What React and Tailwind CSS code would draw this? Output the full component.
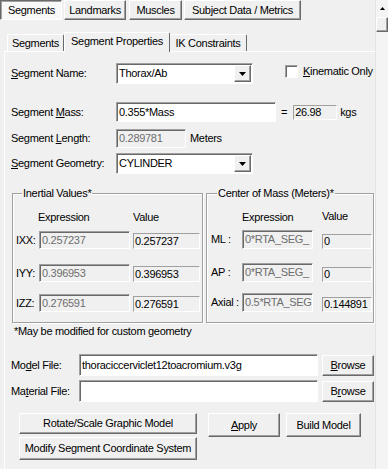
import React from 'react';

const raised = "bg-[#f0f0f0] border border-t-white border-l-white border-r-[#696969] border-b-[#696969] shadow-[inset_-1px_-1px_0_#a0a0a0]";
const sunken = "border border-t-[#a0a0a0] border-l-[#a0a0a0] border-r-white border-b-white shadow-[inset_1px_1px_0_#696969]";
const thin = "border border-t-[#a0a0a0] border-l-[#a0a0a0] border-r-white border-b-white";

const U = ({ children }) => <span className="underline underline-offset-[1px]">{children}</span>;

const Arrow = () => (
    <svg width="7" height="4" viewBox="0 0 7 4"><path d="M0 0h7L3.5 4z" fill="#000" /></svg>
);

const Select = ({ value }) => (
    <div className={`${sunken} bg-white w-[137px] h-[21px] flex items-center pl-[1px] pr-[1px]`}>
        <span className="flex-1 pl-[1px]">{value}</span>
        <div className={`${raised} w-[17px] h-[17px] flex items-center justify-center`}>
            <Arrow />
        </div>
    </div>
);

const Field = ({ className = '', children, disabled }) => (
    <div className={`${sunken} ${disabled ? 'bg-[#f0f0f0] text-[#6d6d6d]' : 'bg-white'} flex items-center pl-[2px] overflow-hidden whitespace-nowrap ${className}`}>
        {children}
    </div>
);

const Value = ({ className = '', children }) => (
    <div className={`${thin} flex items-center pl-[1px] overflow-hidden whitespace-nowrap ${className}`}>{children}</div>
);

const Btn = ({ className = '', children }) => (
    <div className={`${raised} flex items-center justify-center whitespace-nowrap ${className}`}>{children}</div>
);

const InertRow = ({ label, expr, value, className = '' }) => (
    <div className={`flex items-end h-[18px] ${className}`}>
        <span className="w-[23px] self-center">{label}</span>
        <Field disabled className="w-[91px] h-[18px]">{expr}</Field>
        <Value className="ml-[3px] w-[67px] h-[16px]">{value}</Value>
    </div>
);

const ComRow = ({ label, expr, value, className = '' }) => (
    <div className={`flex items-end h-[19px] ${className}`}>
        <span className="w-[31px] self-center">{label}</span>
        <Field disabled className="w-[71px] h-[19px]">{expr}</Field>
        <Value className="ml-[9px] w-[50px] h-[15px]">{value}</Value>
    </div>
);

export default function App() {
    return (
        <div className="w-[388px] h-[469px] flex overflow-hidden bg-[#f0f0f0] text-black text-[11px] leading-[13px] tracking-[-0.3px] font-['Liberation_Sans',Arial,sans-serif]">
            <div className="w-[375px] shrink-0">
                {/* top button bar */}
                <div className="flex h-[20px]">
                    <div className="w-[62px] h-[20px] flex items-center justify-center pt-[1px] pl-[1px] bg-[#f8f8f8] border border-t-[#696969] border-l-[#696969] border-r-white border-b-white shadow-[inset_1px_1px_0_#a0a0a0]">Segments</div>
                    <Btn className="ml-[2px] w-[62px] h-[20px]">Landmarks</Btn>
                    <Btn className="ml-[3px] w-[53px] h-[20px]">Muscles</Btn>
                    <Btn className="ml-[2px] w-[117px] h-[20px]">Subject Data / Metrics</Btn>
                </div>

                {/* inner tabs */}
                <div className="flex items-end h-[31px] pl-[7px]">
                    <div className="w-[57px] h-[17px] flex items-center justify-center border-t border-l border-white border-r border-r-[#696969] rounded-t-[2px]">Segments</div>
                    <div className="relative z-10 -mb-[1px] w-[106px] h-[20px] pb-[3px] flex items-center justify-center bg-[#f0f0f0] border-t border-l border-white border-r border-r-[#696969] rounded-t-[2px]">Segment Properties</div>
                    <div className="w-[77px] h-[17px] flex items-center justify-center border-t border-white border-r border-r-[#696969] rounded-t-[2px]">IK Constraints</div>
                </div>

                {/* panel */}
                <div className="ml-[4px] h-[418px] border-t border-l border-white pl-[6px]">
                    <div className="flex items-center h-[21px] mt-[11px]">
                        <span className="w-[105px]"><U>S</U>egment Name:</span>
                        <Select value="Thorax/Ab" />
                        <div className="flex items-center ml-[32px] mb-[4px]">
                            <div className={`${sunken} bg-white w-[13px] h-[13px]`} />
                            <span className="ml-[5px]"><U>K</U>inematic Only</span>
                        </div>
                    </div>

                    <div className="flex items-center h-[20px] mt-[18px]">
                        <span className="w-[105px]">Segment <U>M</U>ass:</span>
                        <Field className="w-[160px] h-[20px]">0.355*Mass</Field>
                        <span className="ml-[5px]">=</span>
                        <Value className="ml-[6px] w-[44px] h-[15px]">26.98</Value>
                        <span className="ml-[3px]">kgs</span>
                    </div>

                    <div className="flex items-center h-[19px] mt-[7px]">
                        <span className="w-[105px]">Segment <U>L</U>ength:</span>
                        <Field disabled className="w-[70px] h-[19px]">0.289781</Field>
                        <span className="ml-[4px]">Meters</span>
                    </div>

                    <div className="flex items-center h-[21px] mt-[5px]">
                        <span className="w-[105px]"><U>S</U>egment Geometry:</span>
                        <Select value="CYLINDER" />
                    </div>

                    <div className="flex mt-[13px]">
                        <fieldset className="ml-[1px] w-[191px] border border-[#a0a0a0] shadow-[inset_1px_1px_0_#fff,1px_1px_0_#fff] pl-[3px] pb-[10px]">
                            <legend className="ml-[6px] px-[1px] bg-[#f0f0f0]">Inertial Values*</legend>
                            <div className="flex mt-[11px] h-[13px]">
                                <span className="ml-[22px] w-[95px]">Expression</span>
                                <span>Value</span>
                            </div>
                            <InertRow className="mt-[7px]" label="IXX:" expr="0.257237" value="0.257237" />
                            <InertRow className="mt-[15px]" label="IYY:" expr="0.396953" value="0.396953" />
                            <InertRow className="mt-[12px]" label="IZZ:" expr="0.276591" value="0.276591" />
                        </fieldset>
                        <fieldset className="ml-[3px] w-[168px] border border-[#a0a0a0] shadow-[inset_1px_1px_0_#fff,1px_1px_0_#fff] pl-[4px] pb-[10px]">
                            <legend className="ml-[6px] px-[1px] bg-[#f0f0f0]">Center of Mass (Meters)*</legend>
                            <div className="flex mt-[10px] h-[14px]">
                                <span className="ml-[31px] w-[80px] self-end">Expression</span>
                                <span className="self-start">Value</span>
                            </div>
                            <ComRow className="mt-[6px]" label="ML :" expr="0*RTA_SEG_" value="0" />
                            <ComRow className="mt-[14px]" label="AP :" expr="0*RTA_SEG_" value="0" />
                            <ComRow className="mt-[11px]" label="Axial :" expr="0.5*RTA_SEG" value="0.144891" />
                        </fieldset>
                    </div>

                    <div className="ml-[3px] mt-[2px]">*May be modified for custom geometry</div>

                    <div className="flex items-center h-[22px] mt-[16px]">
                        <span className="w-[68px]">Mo<U>d</U>el File:</span>
                        <Field className="w-[239px] h-[22px]">thoraciccerviclet12toacromium.v3g</Field>
                        <Btn className="ml-[4px] w-[52px] h-[21px]"><U>B</U>rowse</Btn>
                    </div>

                    <div className="flex items-center h-[22px] mt-[4px]">
                        <span className="w-[68px]">Ma<U>t</U>erial File:</span>
                        <Field className="w-[239px] h-[22px]" />
                        <Btn className="ml-[4px] w-[52px] h-[21px]">B<U>r</U>owse</Btn>
                    </div>

                    <div className="flex items-start mt-[11px]">
                        <div className="ml-[8px] w-[178px] flex flex-col gap-[3px]">
                            <Btn className="h-[21px]">Rotate/Scale Graphic Model</Btn>
                            <Btn className="h-[23px]">Modify Segment Coordinate System</Btn>
                        </div>
                        <Btn className="ml-[11px] w-[72px] h-[24px]"><U>A</U>pply</Btn>
                        <Btn className="ml-[6px] w-[75px] h-[24px]">Build Model</Btn>
                    </div>
                </div>
            </div>

            {/* scrollbar */}
            <div className="w-[13px] shrink-0 bg-[#f4f4f4] border-l border-[#e3e3e3] flex flex-col items-center">
                <div className="h-[17px] w-full flex items-center justify-center pb-[1px]">
                    <svg width="5" height="3" viewBox="0 0 5 3"><path d="M0 3h5L2.5 0z" fill="#000" /></svg>
                </div>
                <div className={`${raised} w-full h-[15px]`} />
            </div>
        </div>
    );
}
